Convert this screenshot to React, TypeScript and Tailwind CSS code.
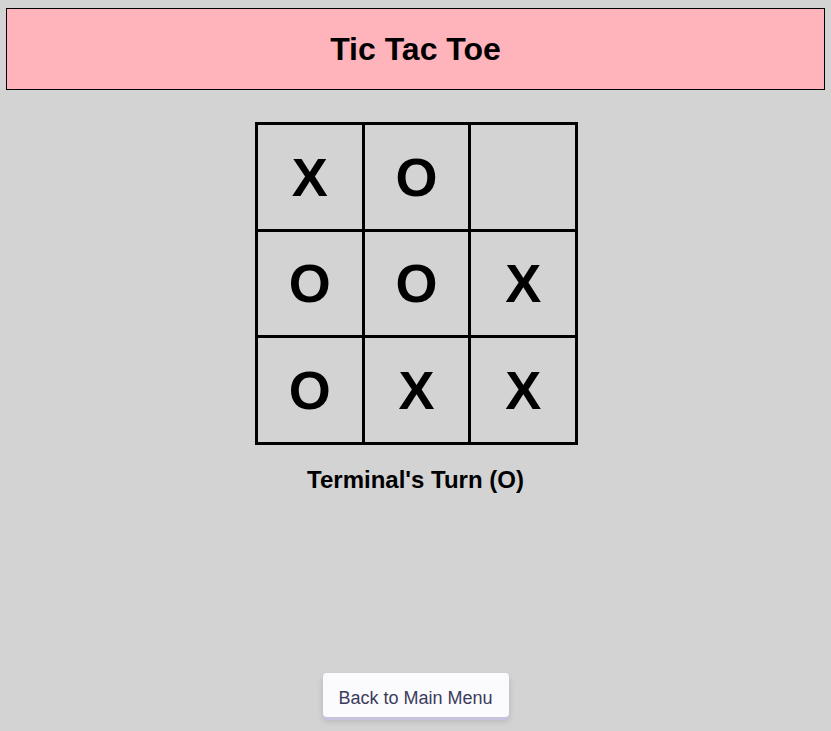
const board = ["X", "O", "", "O", "O", "X", "O", "X", "X"];

function Cell({ value }: { value: string }) {
  return (
    <div className="flex items-center justify-center bg-[#d3d3d3] text-[54px] font-bold leading-none text-black">
      {value}
    </div>
  );
}

export default function App() {
  return (
    <main
      className="flex h-screen flex-col items-center bg-[#d3d3d3] text-black"
      style={{ fontFamily: '"Liberation Sans", Arial, sans-serif' }}
    >
      <header className="mx-[6px] mt-2 flex h-[82px] w-[calc(100%-12px)] items-center justify-center border border-black bg-[#ffb3ba]">
        <h1 className="text-[32px] font-bold">Tic Tac Toe</h1>
      </header>

      <section className="mt-[32px] ml-[2px] grid h-[323px] w-[323px] grid-cols-3 grid-rows-3 gap-[3px] border-[3px] border-black bg-black">
        {board.map((v, i) => (
          <Cell key={i} value={v} />
        ))}
      </section>

      <h2 className="mt-[19px] text-2xl font-bold">Terminal's Turn (O)</h2>

      <button className="mt-auto mb-[14px] h-[44px] w-[186px] rounded-[4px] bg-[#fbfbfd] pt-[6px] text-[18px] text-[#3a3b5c] shadow-[0_3px_0_#c6c3dc,0_4px_6px_rgba(0,0,0,0.15)]">
        Back to Main Menu
      </button>
    </main>
  );
}
